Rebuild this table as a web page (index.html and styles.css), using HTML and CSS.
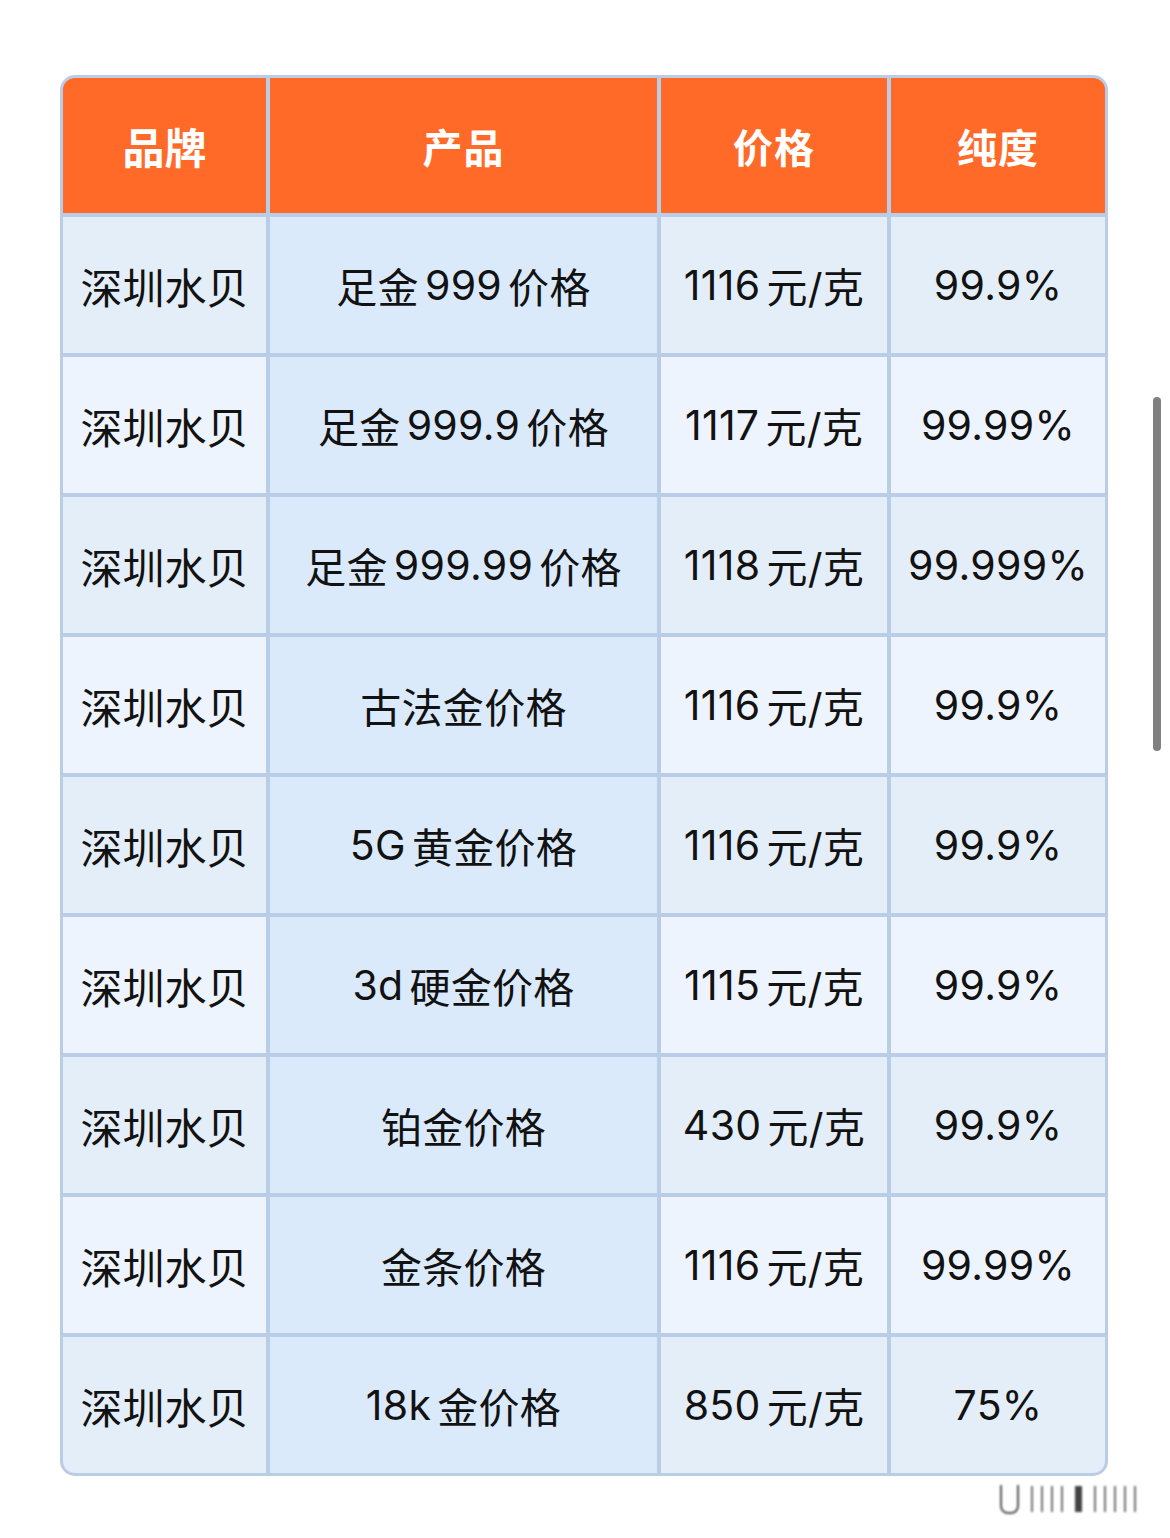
FILE: index.html
```html
<!DOCTYPE html>
<html lang="zh-CN">
<head>
<meta charset="utf-8">
<title>深圳水贝金价</title>
<link rel="stylesheet" href="styles.css">
</head>
<body>
<main class="page">
  <div class="table">
    <div class="cell head c1 tl">品牌</div>
    <div class="cell head c2">产品</div>
    <div class="cell head c3">价格</div>
    <div class="cell head c4 tr">纯度</div>

    <div class="cell odd c1">深圳水贝</div>
    <div class="cell prod">足金<span class="sp"></span>999<span class="sp"></span>价格</div>
    <div class="cell odd">1116<span class="sp"></span>元/克</div>
    <div class="cell odd">99.9%</div>

    <div class="cell even c1">深圳水贝</div>
    <div class="cell prod">足金<span class="sp"></span>999.9<span class="sp"></span>价格</div>
    <div class="cell even">1117<span class="sp"></span>元/克</div>
    <div class="cell even">99.99%</div>

    <div class="cell odd c1">深圳水贝</div>
    <div class="cell prod">足金<span class="sp"></span>999.99<span class="sp"></span>价格</div>
    <div class="cell odd">1118<span class="sp"></span>元/克</div>
    <div class="cell odd">99.999%</div>

    <div class="cell even c1">深圳水贝</div>
    <div class="cell prod">古法金价格</div>
    <div class="cell even">1116<span class="sp"></span>元/克</div>
    <div class="cell even">99.9%</div>

    <div class="cell odd c1">深圳水贝</div>
    <div class="cell prod">5G<span class="sp"></span>黄金价格</div>
    <div class="cell odd">1116<span class="sp"></span>元/克</div>
    <div class="cell odd">99.9%</div>

    <div class="cell even c1">深圳水贝</div>
    <div class="cell prod">3d<span class="sp"></span>硬金价格</div>
    <div class="cell even">1115<span class="sp"></span>元/克</div>
    <div class="cell even">99.9%</div>

    <div class="cell odd c1">深圳水贝</div>
    <div class="cell prod">铂金价格</div>
    <div class="cell odd">430<span class="sp"></span>元/克</div>
    <div class="cell odd">99.9%</div>

    <div class="cell even c1">深圳水贝</div>
    <div class="cell prod">金条价格</div>
    <div class="cell even">1116<span class="sp"></span>元/克</div>
    <div class="cell even">99.99%</div>

    <div class="cell odd c1 bl">深圳水贝</div>
    <div class="cell prod">18k<span class="sp"></span>金价格</div>
    <div class="cell odd">850<span class="sp"></span>元/克</div>
    <div class="cell odd br">75%</div>
  </div>
  <div class="scrollbar"></div>
  <div class="watermark" aria-hidden="true"><span class="wm-u"></span><span class="wm-bars"><i></i><i></i><i></i><i></i><i class="thick"></i><i></i><i></i><i></i><i></i><i></i></span></div>
</main>
</body>
</html>
```

FILE: styles.css
```css
html, body {
  margin: 0;
  padding: 0;
  background: #ffffff;
}

.page {
  position: relative;
  width: 1170px;
  height: 1538px;
  padding: 75px 62px 0 60px;
  box-sizing: border-box;
  font-family: Inter, "Noto Sans CJK SC", "Noto Sans", sans-serif;
}

.table {
  display: grid;
  grid-template-columns: 203px 387px 226px 214px;
  grid-template-rows: 135px repeat(9, 136px);
  gap: 4px;
  padding: 3px;
  background: #b9cde6;
  border-radius: 15px;
  overflow: hidden;
  width: 1048px;
  box-sizing: border-box;
}

.cell {
  display: flex;
  align-items: center;
  justify-content: center;
  font-size: 41px;
  color: #121212;
  white-space: nowrap;
  letter-spacing: 0.3px;
}

.head {
  background: #ff6a29;
  color: #ffffff;
  font-family: "Noto Sans CJK SC", sans-serif;
  font-weight: 700;
  font-size: 40px;
  letter-spacing: 1px;
}

.odd { background: #e4eef9; }
.even { background: #edf4fd; }
.prod { background: #dbeafb; }

.c1 {
  font-family: "Noto Sans CJK SC", sans-serif;
  font-size: 42px;
  letter-spacing: 0;
}

.tl { border-top-left-radius: 12px; }
.tr { border-top-right-radius: 12px; }
.bl { border-bottom-left-radius: 12px; }
.br { border-bottom-right-radius: 12px; }

.sp {
  display: inline-block;
  width: 6px;
}

.scrollbar {
  position: absolute;
  left: 1153px;
  top: 397px;
  width: 8px;
  height: 354px;
  border-radius: 4px;
  background: #808080;
}

.watermark {
  position: absolute;
  left: 1000px;
  top: 1483px;
  height: 31px;
  display: flex;
  align-items: flex-end;
  gap: 12px;
  filter: blur(0.9px);
  opacity: 0.85;
}

.wm-u {
  width: 15px;
  height: 27px;
  border: 2px solid #333;
  border-top: none;
  border-radius: 0 0 8px 8px;
}

.wm-bars {
  display: flex;
  gap: 8px;
  height: 28px;
}

.wm-bars i {
  display: block;
  width: 2px;
  height: 26px;
  background: #555;
}

.wm-bars i.thick {
  width: 7px;
  background: #222;
  margin: 0 4px;
}
```
